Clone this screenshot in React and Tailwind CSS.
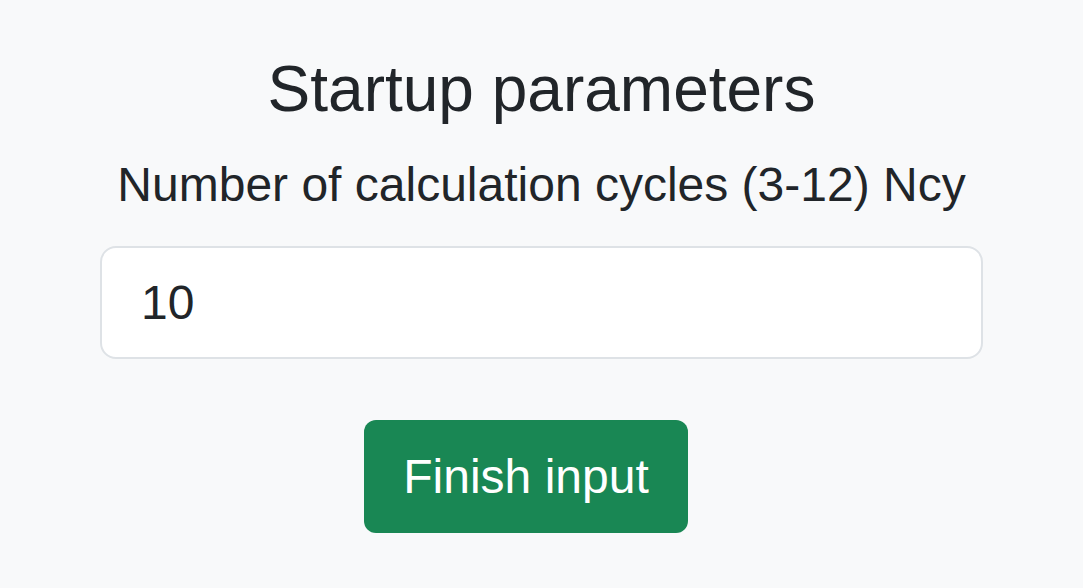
import { useState } from 'react';

export default function App() {
  const [cycles, setCycles] = useState('10');

  return (
    <div className="min-h-[588px] w-full bg-[#f8f9fa] text-[#212529] font-['Liberation_Sans',Arial,sans-serif]">
      <div className="flex flex-col items-center px-[100px]">
        <h2 className="mt-[51px] text-[64px] leading-[77px] font-normal text-center">
          Startup parameters
        </h2>
        <label
          htmlFor="ncy"
          className="mt-[28px] text-[48px] leading-[58px] text-center"
        >
          Number of calculation cycles (3-12) Ncy
        </label>
        <input
          id="ncy"
          type="text"
          value={cycles}
          onChange={(e) => setCycles(e.target.value)}
          className="mt-[32px] w-full h-[113px] bg-white border-2 border-[#dee2e6] rounded-[16px] pl-[39px] pr-[39px] text-[48px] text-[#212529] outline-none"
        />
        <div className="w-full flex justify-center pr-[31px] mt-[61px]">
          <button
            type="button"
            className="w-[324px] h-[113px] flex items-center justify-center rounded-[12px] bg-[#198754] text-white text-[48px] leading-[58px]"
          >
            Finish input
          </button>
        </div>
      </div>
    </div>
  );
}
